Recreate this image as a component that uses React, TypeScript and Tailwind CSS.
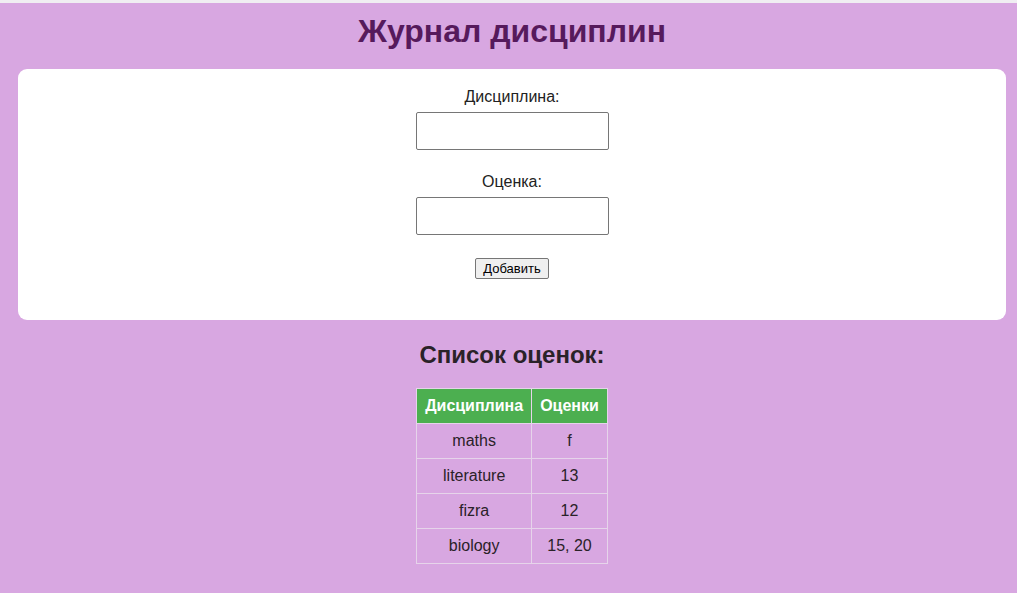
import { useState } from 'react';

interface Row {
  subject: string;
  grades: string;
}

const ROWS: Row[] = [
  { subject: 'maths', grades: 'f' },
  { subject: 'literature', grades: '13' },
  { subject: 'fizra', grades: '12' },
  { subject: 'biology', grades: '15, 20' },
];

export default function App() {
  const [subject, setSubject] = useState('');
  const [grade, setGrade] = useState('');

  return (
    <div className="min-h-[593px] bg-[#d8a7e1] font-['Liberation_Sans',Arial,sans-serif] text-[#222]">
      <div className="h-[3px] bg-[#f0eef2]" />

      {/* Header */}
      <div className="h-[66px] pl-[7px] flex items-center justify-center">
        <h1 className="text-[32px] leading-[37px] font-bold text-[#561a5c] -mt-[10px]">Журнал дисциплин</h1>
      </div>

      {/* Form card */}
      <div className="ml-[18px] w-[988px] h-[251px] bg-white rounded-[9px] pt-[19px] flex flex-col items-center">
        <label className="text-base leading-[18px] text-[#222]">Дисциплина:</label>
        <input
          value={subject}
          onChange={e => setSubject(e.target.value)}
          className="mt-[6px] w-[193px] h-[38px] border border-[#767676] rounded-[2px] px-2 outline-none"
        />
        <label className="mt-[23px] text-base leading-[18px] text-[#222]">Оценка:</label>
        <input
          value={grade}
          onChange={e => setGrade(e.target.value)}
          className="mt-[6px] w-[193px] h-[38px] border border-[#767676] rounded-[2px] px-2 outline-none"
        />
        <button className="mt-[23px] h-[21px] px-[7px] text-[13px] leading-none text-black bg-[#efefef] border border-[#767676] rounded-[2px]">
          Добавить
        </button>
      </div>

      {/* List */}
      <div className="pl-[7px] flex flex-col items-center">
        <h2 className="mt-[21px] text-[24px] leading-[28px] font-bold text-[#2a2228]">Список оценок:</h2>
        <table className="mt-[19px] border-collapse text-base">
          <thead>
            <tr className="bg-[#4caf50] text-white">
              <th className="border border-[#e6d4ea] px-2 h-[35px] font-bold">Дисциплина</th>
              <th className="border border-[#e6d4ea] px-2 h-[35px] font-bold">Оценки</th>
            </tr>
          </thead>
          <tbody>
            {ROWS.map(r => (
              <tr key={r.subject}>
                <td className="border border-[#e6d4ea] px-2 h-[35px] text-center text-[#2a2228]">{r.subject}</td>
                <td className="border border-[#e6d4ea] px-2 h-[35px] text-center text-[#2a2228]">{r.grades}</td>
              </tr>
            ))}
          </tbody>
        </table>
      </div>
    </div>
  );
}
